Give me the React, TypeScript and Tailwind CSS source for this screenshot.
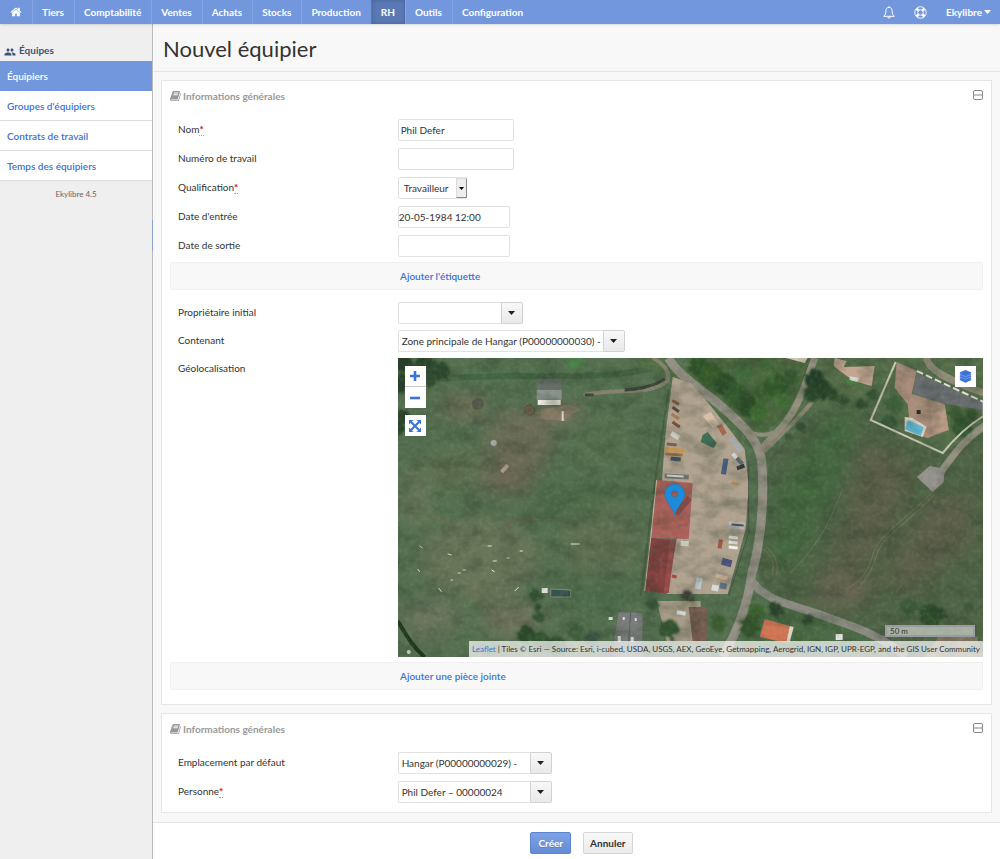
import type { ReactNode } from "react";
import { MdGroup } from "react-icons/md";

const NAV = ["Tiers", "Comptabilité", "Ventes", "Achats", "Stocks", "Production", "RH", "Outils", "Configuration"];

const SIDE_LINKS = ["Équipiers", "Groupes d'équipiers", "Contrats de travail", "Temps des équipiers"];

function HomeIcon() {
  return (
    <svg viewBox="0 0 1792 1792" className="size-3" fill="currentColor" aria-hidden="true">
      <path d="M1472 992v480q0 26-19 45t-45 19H1024v-384H768v384H384q-26 0-45-19t-19-45V992q0-1 .5-3t.5-3l575-474 575 474q1 2 1 6zm223-69l-62 74q-8 9-21 11h-3q-13 0-21-7L896 424l-692 577q-12 8-24 7-13-2-21-11l-62-74q-8-10-7-23.5t11-21.5l719-599q32-26 76-26t76 26l244 204V288q0-14 9-23t23-9h192q14 0 23 9t9 23v408l219 182q10 8 11 21.5t-7 23.5z" />
    </svg>
  );
}

function BellIcon() {
  return (
    <svg viewBox="0 0 12 13" className="h-[13px] w-3" fill="none" stroke="currentColor" aria-hidden="true">
      <path d="M6 1.3C3.9 1.3 2.9 3 2.9 4.9c0 2.9-.9 4.2-2.2 5.4h10.6C10 9.1 9.1 7.8 9.1 4.9 9.1 3 8.1 1.3 6 1.3z" />
      <path d="M4.8 11c.1.7.6 1.2 1.2 1.2S7.1 11.7 7.2 11M6 .3v1" />
    </svg>
  );
}

function LifebuoyIcon() {
  return (
    <svg viewBox="0 0 14 14" className="size-[13px]" fill="none" stroke="currentColor" aria-hidden="true">
      <circle cx="7" cy="7" r="6.2" />
      <circle cx="7" cy="7" r="2.9" />
      <path d="M2.7 2.7l2.2 2.2M11.3 2.7L9.1 4.9M2.7 11.3l2.2-2.2M11.3 11.3L9.1 9.1" strokeWidth="2.8" />
    </svg>
  );
}

function BookIcon() {
  return (
    <svg viewBox="0 0 1664 1792" className="h-3 w-[11px]" fill="currentColor" aria-hidden="true">
      <path d="M1639 478q40 57 18 129l-275 906q-19 64-76.500 107.500T1183 1664H260q-77 0-148.500-53.500T12 1479q-24-67-2-127 0-4 3-27t4-37q1-8-3-21.500t-3-19.500q2-11 8-21t16.500-23.500T52 1179q23-38 45-91.500t30-91.500q3-10 .5-30t-.5-28q3-11 17-28t17-23q21-36 42-92t25-90q1-9-2.500-32t.5-28q4-13 22-30.500t22-22.500q19-26 42.500-84.500T340 411q1-8-3-25.500t-2-26.500q2-8 9-18t18-23 17-21q8-12 16.500-30.500t15-35 16-36 19.500-32 26.500-23.500 36-11.500T556 133l-1 3q38-9 51-9h761q74 0 114 56t18 130l-274 906q-36 119-71.500 153.500T1025 1407H156q-27 0-38 15-11 16-1 43 24 70 144 70h923q29 0 56-15.500t35-41.500l300-987q7-22 5-57 38 15 59 43zm-1064 2q-4 13 2 22.500t20 9.500h608q13 0 25.500-9.500T1247 480l21-64q4-13-2-22.500t-20-9.500H638q-13 0-25.500 9.500T596 416zm-83 256q-4 13 2 22.500t20 9.500h608q13 0 25.500-9.500T1164 736l21-64q4-13-2-22.500t-20-9.500H555q-13 0-25.500 9.500T513 672z" />
    </svg>
  );
}

function Caret() {
  return (
    <svg viewBox="0 0 7 4" className="h-1 w-[7px]" fill="currentColor" aria-hidden="true">
      <path d="M0 0h7L3.5 4z" />
    </svg>
  );
}

function Panel({ children }: { children: ReactNode }) {
  return (
    <section className="relative border border-[#e6e6e6] bg-white px-2 pt-2">
      <h2 className="flex h-[14px] items-center gap-[2px] text-[10px] leading-3 font-bold text-[#999]">
        <BookIcon />
        Informations générales
      </h2>
      <button type="button" aria-label="Réduire" className="absolute top-[9px] right-2 text-[#888]">
        <svg viewBox="0 0 10 10" className="size-[10px]" fill="none" stroke="currentColor">
          <rect x=".5" y=".5" width="9" height="9" rx="1.5" />
          <path d="M1 5h8" />
        </svg>
      </button>
      {children}
    </section>
  );
}

function Row({ label, id, required, children }: { label: string; id: string; required?: boolean; children: ReactNode }) {
  return (
    <div className="flex items-start">
      <label htmlFor={id} className="w-[28%] shrink-0 pl-2 leading-5">
        {label}
        {required && <span className="border-b border-dotted border-[#e88] font-bold text-[#e00000]">*</span>}
      </label>
      {children}
    </div>
  );
}

function Combo({ id, value, className }: { id: string; value?: string; className: string }) {
  return (
    <div className="flex h-[22px]">
      <input
        id={id}
        defaultValue={value}
        className={`rounded-l-xs border border-r-0 border-[#e2e2e2] bg-white pl-[3px] text-[10px] outline-none ${className}`}
      />
      <button
        type="button"
        aria-label="Ouvrir la liste"
        className="flex w-[22px] items-center justify-center rounded-r-xs border border-[#d2d2d2] bg-linear-to-b from-[#f8f8f8] to-[#e9e9e9] text-[#222]"
      >
        <Caret />
      </button>
    </div>
  );
}

function Strip({ children }: { children: ReactNode }) {
  return (
    <div className="flex h-7 items-center rounded-xs border border-[#f0f0f0] bg-[#f8f8f8]">
      <a href="#" className="ml-[28%] pl-[2px] font-semibold text-[#3b73d9]">
        {children}
      </a>
    </div>
  );
}

// [x, y, width, height, rotation, colour]
const VEHICLES: [number, number, number, number, number, string][] = [
  [671, 402, 8, 3, 30, "#8d5a40"],
  [671, 409, 8, 3, 35, "#54483f"],
  [670, 416, 9, 3, 35, "#a87a4c"],
  [671, 424, 9, 3, 35, "#7c4b38"],
  [670, 434, 9, 5, 30, "#d8d6d0"],
  [666, 444, 10, 3, 5, "#77604d"],
  [664, 449, 20, 4, 4, "#c3944f"],
  [664, 454, 18, 3, 4, "#9b6a3a"],
  [670, 458, 10, 4, 5, "#41505e"],
  [664, 475, 24, 5, 3, "#6c706e"],
  [666, 476, 17, 2, 3, "#c6c8c4"],
  [727, 443, 17, 5, 55, "#a5abb0"],
  [731, 455, 6, 4, 50, "#d3d8da"],
  [735, 460, 8, 4, 45, "#5b6770"],
  [736, 466, 8, 4, -20, "#2f3840"],
  [716, 465, 16, 5, 100, "#475e7f"],
  [731, 483, 7, 3, 10, "#b08b5c"],
  [728, 523, 16, 7, 5, "#b6b8b6"],
  [731, 525, 12, 2, 5, "#4b4f50"],
  [728, 537, 9, 3, 5, "#f2f2f0"],
  [728, 542, 9, 3, 5, "#e9e9e6"],
  [728, 547, 9, 3, 5, "#f2f2f0"],
  [715, 543, 9, 4, 100, "#a2543f"],
  [721, 560, 10, 7, 15, "#4c5480"],
  [715, 576, 12, 4, 15, "#d9b99a"],
  [711, 586, 7, 6, 10, "#d7dbdd"],
  [719, 584, 7, 6, 10, "#5f7385"],
  [695, 579, 6, 11, 10, "#c9d2d8"],
  [680, 542, 8, 5, 5, "#e6e0d4"],
  [671, 576, 5, 3, 10, "#a9473f"],
  [676, 612, 9, 4, 10, "#dedede"],
];

const TREES: [number, number, number, string][] = [
  [402, 364, 9, "#253d28"], [412, 372, 8, "#2c452c"], [424, 365, 10, "#2a452b"], [438, 372, 10, "#2d492d"],
  [430, 381, 7, "#324d31"], [399, 383, 9, "#27402a"], [401, 418, 8, "#2b442c"], [398, 430, 6, "#2b442c"],
  [575, 362, 9, "#4b8246"], [698, 368, 10, "#2f5429"], [710, 377, 12, "#345c2c"], [724, 385, 11, "#2c4e27"],
  [735, 396, 12, "#35602d"], [746, 406, 11, "#2b4d27"], [757, 414, 9, "#3d6b32"], [763, 396, 10, "#3d6433"],
  [775, 386, 11, "#335a2c"], [782, 401, 8, "#426f38"], [790, 379, 8, "#355b30"], [744, 374, 9, "#41683a"],
  [768, 371, 10, "#476d3d"], [814, 380, 10, "#233f25"], [822, 391, 10, "#253f26"], [811, 395, 8, "#2c492a"],
  [831, 394, 7, "#2b4829"], [842, 401, 6, "#355234"], [852, 381, 6, "#4c8240"], [872, 396, 6, "#365235"],
  [800, 428, 5, "#345034"], [788, 438, 4, "#3b5737"], [860, 405, 5, "#2f4d2f"], [893, 405, 9, "#3c5f37"],
  [888, 424, 8, "#38593a"], [961, 428, 10, "#33552e"], [955, 414, 7, "#3a5a31"], [971, 415, 6, "#35542f"],
  [535, 596, 6, "#304f30"], [537, 608, 4, "#2f4d30"], [538, 618, 5, "#345436"], [525, 636, 9, "#2a4b2b"],
  [540, 642, 9, "#31542f"], [556, 647, 10, "#2e512d"], [575, 633, 8, "#3c5f3b"], [592, 640, 8, "#3a5a44"],
  [651, 605, 6, "#38583a"], [668, 630, 10, "#31522f"], [686, 596, 6, "#3a3a31"], [775, 611, 7, "#294329"],
  [756, 613, 8, "#3c632f"], [749, 628, 10, "#35592b"], [807, 621, 6, "#2d482d"], [718, 625, 8, "#3e6033"],
  [796, 637, 6, "#42623a"], [930, 617, 11, "#2d4d2c"], [908, 607, 9, "#3c5b38"], [938, 614, 7, "#2b462a"],
  [968, 608, 5, "#3c5938"],
];

const PATCHES: [number, number, number, number, string][] = [
  [463, 408, 24, 12, "#70705a"], [520, 440, 36, 30, "#6b6c56"], [505, 476, 32, 20, "#6b6855"],
  [560, 414, 26, 7, "#7d7563"], [455, 470, 34, 18, "#5f7050"], [480, 560, 60, 40, "#697558"],
  [430, 620, 30, 20, "#6c765d"], [600, 440, 30, 20, "#587350"], [600, 540, 40, 40, "#5e6f51"],
  [415, 500, 14, 30, "#69765a"], [510, 620, 32, 16, "#6f735d"], [570, 500, 40, 20, "#4d6a4a"],
  [600, 595, 40, 9, "#476b4a"],
];

function Aerial() {
  return (
    <svg
      viewBox="397 359 586 299"
      preserveAspectRatio="xMidYMid slice"
      className="block h-full w-full"
      role="img"
      aria-label="Vue aérienne"
    >
      <defs>
        <filter id="soft" x="-50%" y="-50%" width="200%" height="200%">
          <feGaussianBlur stdDeviation="9" />
        </filter>
        <filter id="leafy" x="-30%" y="-30%" width="160%" height="160%">
          <feTurbulence type="fractalNoise" baseFrequency="0.2" numOctaves="2" seed="4" />
          <feDisplacementMap in="SourceGraphic" scale="9" />
          <feGaussianBlur stdDeviation="0.8" />
        </filter>
        <filter id="grain">
          <feTurbulence type="fractalNoise" baseFrequency="0.05 0.07" numOctaves="4" seed="11" />
          <feColorMatrix values="0 0 0 0 0.02  0 0 0 0 0.04  0 0 0 0 0.02  1.8 0 0 0 -0.7" />
        </filter>
        <filter id="speck">
          <feTurbulence type="fractalNoise" baseFrequency="0.22" numOctaves="2" seed="7" />
          <feColorMatrix values="0 0 0 0 0.6  0 0 0 0 0.6  0 0 0 0 0.5  0 1.6 0 0 -0.7" />
        </filter>
      </defs>

      <path fill="#546f4f" d="M397 359h586v299H397z" />
      <g filter="url(#soft)">
        {PATCHES.map(([cx, cy, rx, ry, fill]) => (
          <ellipse key={`${cx}-${cy}`} cx={cx} cy={cy} rx={rx} ry={ry} fill={fill} />
        ))}
      </g>
      <path d="M440 380C520 372 600 384 655 368" stroke="#3f613f" strokeWidth="6" fill="none" opacity=".8" />
      <path d="M668 390L655 478L640 597" stroke="#485e41" strokeWidth="2" fill="none" />

      {/* fields on the east side */}
      <path fill="#4a663e" d="M686 359H815L798 395L783 418L764 434L745 425L700 385z" />
      <path fill="#546d49" d="M820 359H983V470L930 460L868 425L815 410L790 425z" />
      <path fill="#4f6446" d="M817 411L867 414L942 455L983 430V658H890L830 615L772 596L757 575L766 520L768 460z" />
      <g filter="url(#soft)">
        <path fill="#42673e" d="M825 415h32l-20 70-50 90-15-20 5-60z" />
        <path fill="#5b5e48" d="M862 440l50 25-10 50-55 75-20-10 20-70z" />
        <path fill="#5b5f48" d="M920 510l50-25v60l-60 50-30-10z" />
        <path fill="#656350" d="M820 570l60 10-20 30-50-5z" />
      </g>
      <g fill="none" stroke="#85825b" strokeWidth="1" opacity=".6">
        <path d="M930 495C905 520 880 535 873 553C868 572 858 585 848 588" />
        <path d="M933 496C908 523 884 536 877 553C872 570 866 580 860 586" />
        <path d="M763 550c8 8 12 14 8 26M766 548c9 9 12 18 10 28" />
        <path d="M842 490C830 520 820 545 788 575" />
      </g>
      <path d="M765 600C800 612 850 626 885 650H740z" fill="#4b6b44" />

      {/* roads */}
      <g fill="none" strokeLinejoin="round">
        <path d="M640 359C668 368 690 378 705 394C725 412 740 425 752 440" stroke="#516e47" strokeWidth="17" />
        <path d="M583 396C615 388 650 398 667 381C670 373 662 364 652 359" stroke="#84816d" strokeWidth="4" />
        <path d="M624 391C640 390 655 386 664 380" stroke="#39443a" strokeWidth="3" />
        <path d="M584 396h9" stroke="#39443a" strokeWidth="3" />
        <path d="M668 359C676 375 700 390 718 405C740 424 758 440 761 462C764 500 760 545 751 575C748 600 738 630 722 658" stroke="#949083" strokeWidth="9" />
        <path d="M814 359C808 375 802 398 790 416C780 432 768 440 760 452" stroke="#928e7c" strokeWidth="7" />
        <path d="M812 402C800 418 782 434 764 452" stroke="#8a8572" strokeWidth="4" />
        <path d="M745 431C757 438 770 437 780 430" stroke="#8f8b7a" strokeWidth="4" />
        <path d="M752 583C765 603 800 608 823 617C850 627 880 635 905 658" stroke="#8a8a80" strokeWidth="8" />
        <path d="M926 359C927 370 945 380 983 394" stroke="#908c78" strokeWidth="7" />
        <path d="M934 480C948 466 955 446 985 426" stroke="#949182" strokeWidth="7" />
      </g>
      <path fill="#93918b" d="M916 478l13-11 15 3-1 13-11 10z" />

      <path fill="#b0a28f" d="M672 378L690 384L706 402L727 428L744 450L748 487L745 530L727 595H666L676 540L690 484H661L665 433z" />
      <path fill="#a69b87" d="M656 602h44v40h-34z" />
      <path d="M748 462V534L728 597" stroke="#4a5344" strokeWidth="1" fill="none" />

      <g filter="url(#leafy)">
        {TREES.map(([cx, cy, r, fill]) => (
          <circle key={`${cx}-${cy}`} cx={cx} cy={cy} r={r} fill={fill} />
        ))}
      </g>

      {/* barn and marks in the west meadow */}
      <path fill="#8f7a65" d="M540 410l28-4 12 4-10 6-6 6-24-2z" opacity=".7" />
      <path fill="#656d66" d="M536 380h24l1 11h-25z" />
      <path fill="#87918a" d="M536 391h25v10h-25z" />
      <path fill="#fffbef" d="M537 401h23v5h-23z" />
      <path d="M562 412v10" stroke="#ded6c5" strokeWidth="2" />
      <circle cx="477" cy="405" r="6" fill="#4b4d41" opacity=".7" />
      <circle cx="529" cy="411" r="5" fill="#756350" stroke="#544e3f" />
      <circle cx="493" cy="444" r="3" fill="#a3a7a0" />
      <path d="M501 473l6-7" stroke="#b6a58c" strokeWidth="4" />
      <path d="M505 524C520 522 540 520 552 520" stroke="#7b6349" strokeWidth="1" fill="none" />
      <path d="M425 512l35 20M470 590l38 38" stroke="#796d55" strokeWidth="3" opacity=".4" />
      <path
        d="M419 547l3 2M447 555l4 1M487 547h4M492 562h4M506 559h3M519 552h3M417 570l2 3M457 574h3M438 589l3 4M450 581h2M462 571h3M514 592l4-4M570 545h9M491 571l3 2"
        stroke="#e9e6da"
        strokeWidth="1"
      />
      <path fill="#d8dedb" d="M541 589h6v5h-6z" />
      <path fill="#36524f" stroke="#7f8878" strokeWidth="1" d="M550 590l20 1v7h-20z" />
      <path d="M397 622C405 635 412 648 424 658" stroke="#22371f" strokeWidth="4" fill="none" />
      <circle cx="408" cy="653" r="2" fill="#e4e8df" />

      {/* buildings */}
      <path fill="#a95f58" d="M656 481l36 3-4 56-38-1z" />
      <path fill="#85403f" d="M650 539l21 2-7 53-20-2z" />
      <path fill="#994b46" d="M669 541l6 1-7 52h-5z" />
      <path d="M656 481l-6 58-6 53" stroke="#c9b5a3" strokeWidth="1" fill="none" />
      <path fill="#777a79" d="M618 613l24 1-1 44h-30z" />
      <path d="M630 613l-3 45" stroke="#555a59" />
      <path fill="#d9dedc" d="M622 618h2v3h-2zM634 619h2v3h-2zM608 618h4v3h-4zM617 637h3v6h-3zM630 638h3v5h-3z" />
      <path fill="#795c50" d="M688 608h18v34h-14z" />
      <path fill="#cf7453" d="M764 620l25 7-3 17-27-6z" />
      <path fill="#dad4c4" d="M789 627l4 1-4 15-3-1z" />
      <path fill="#e7e9e6" d="M835 635h7v6h-7z" />
      <path fill="#b78d7c" d="M938 638h38l7 20h-60z" opacity=".5" />
      <path fill="#c2a590" d="M834 359l12 3-3 6 31-1-3 20-18-5-11-8-9-7z" />
      <path fill="#d5d5cd" d="M849 377l9 2-1 4-8-2z" />
      <path fill="#d0c8b6" d="M785 359h22l-3 5z" />
      <path fill="#696d70" d="M916 374L983 403V411L940 404L912 395z" />
      <path d="M916 372L983 403" stroke="#e6e4d9" strokeWidth="2" strokeDasharray="7 3" />
      <path fill="#a98c79" d="M896 363l20 9-5 23 33 10 4 26-21 8-17-5-3-29-13-16z" />
      <path fill="#b99a85" d="M930 402l14 4 4 25-16 4z" />
      <path fill="#2c2a25" d="M916 411h4v4h-4z" />
      <path fill="#e2d6c5" d="M904 418l8 1 14 9-4 10-18-6z" />
      <path fill="#63c2e4" d="M907 421l16 7-3 9-16-7z" />
      <path d="M895 363L870 421L942 454C955 438 968 426 983 417V402" stroke="#c9c7b5" strokeWidth="2" fill="none" />
      <path fill="#d6c1a8" d="M702 417l8-4 8 12-6 4z" />
      <path fill="#a2674f" d="M716 427l5-2 5 9-4 3z" />
      <path fill="#3f6c53" d="M702 436l5-3 9 11-3 5-13-6z" />

      {VEHICLES.map(([x, y, width, height, angle, fill]) => (
        <rect
          key={`${x}-${y}`}
          x={x}
          y={y}
          width={width}
          height={height}
          fill={fill}
          transform={`rotate(${angle} ${x + width / 2} ${y + height / 2})`}
        />
      ))}

      <path d="M397 359h586v299H397z" filter="url(#grain)" opacity=".4" />
      <path d="M397 359h586v299H397z" filter="url(#speck)" opacity=".15" />

      <path d="M675 515l14-16" stroke="#331e1c" strokeWidth="6" opacity=".3" />
      <path
        fill="#1e8bd8"
        stroke="#1874b8"
        strokeWidth=".5"
        fillRule="evenodd"
        d="M674 516C672 508 664 502 664 495a9.500 9.500 0 0 1 20 0C684 502 676 508 674 516zM674 491.500a3.300 3.300 0 1 0 0 6.600a3.300 3.300 0 1 0 0-6.600z"
      />
    </svg>
  );
}

const MAP_BUTTON = "flex size-[21px] items-center justify-center bg-white text-[#3b73d9]";

function Map() {
  return (
    <div id="geolocation" className="relative h-[299px] min-w-0 flex-1 overflow-hidden">
      <Aerial />
      <div className="absolute top-2 left-[7px] flex flex-col gap-[7px]">
        <div className="divide-y divide-[#ccc]">
          <button type="button" aria-label="Zoom avant" className={MAP_BUTTON}>
            <svg viewBox="0 0 10 10" className="size-[10px]" stroke="currentColor" strokeWidth="2.6">
              <path d="M5 0v10M0 5h10" />
            </svg>
          </button>
          <button type="button" aria-label="Zoom arrière" className={MAP_BUTTON}>
            <svg viewBox="0 0 10 10" className="size-[10px]" stroke="currentColor" strokeWidth="2.6">
              <path d="M0 5h10" />
            </svg>
          </button>
        </div>
        <button type="button" aria-label="Plein écran" className={MAP_BUTTON}>
          <svg viewBox="0 0 12 12" className="size-3" fill="currentColor">
            <path d="M0 0h4.500L0 4.500zM12 0v4.500L7.500 0zM0 12V7.500L4.500 12zM12 12H7.500L12 7.500z" />
            <path d="M2 2l8 8M10 2l-8 8" stroke="currentColor" strokeWidth="2" />
          </svg>
        </button>
      </div>
      <button type="button" aria-label="Calques" className={`${MAP_BUTTON} absolute top-2 right-[7px]`}>
        <svg viewBox="0 0 13 13" className="size-[13px]" fill="currentColor">
          <path d="M6.500 0l6 2.500-1 .9 1 .9-1 .9 1 1-1 .9 1 1-1 .9 1 .9-6 2.900-6-2.900 1-.9-1-.9 1-1-1-.9 1-.9-1-1 1-.9-1-.9z" />
          <path d="M1 4.400l5.500 2.300L12 4.400M1 6.900l5.500 2.300L12 6.900" stroke="#fff" strokeWidth=".3" fill="none" />
        </svg>
      </button>
      <div className="absolute right-2 bottom-5 flex h-3 w-[90px] items-center border-2 border-[#9a9aa0] bg-white/50 pl-[3px] text-[8px]">
        50 m
      </div>
      <div className="absolute right-0 bottom-0 h-4 bg-white/70 px-[3px] text-[8px] leading-4 whitespace-nowrap">
        <a href="#" className="text-[#3b73d9]">
          Leaflet
        </a>{" "}
        | Tiles © Esri — Source: Esri, i-cubed, USDA, USGS, AEX, GeoEye, Getmapping, Aerogrid, IGN, IGP, UPR-EGP, and the GIS User Community
      </div>
    </div>
  );
}

const FIELD = "h-[22px] rounded-xs border border-[#e2e2e2] bg-white text-[10px] outline-none";

export default function App() {
  return (
    <div className="flex min-h-screen flex-col bg-[#f8f8f8] font-[Lato,sans-serif] text-[10px] text-[#333]">
      <header className="relative z-10 flex h-6 items-stretch bg-[#7297dd] font-bold text-white shadow-sm">
        <nav className="flex">
          <a href="#" aria-label="Accueil" className="flex w-8 items-center justify-center">
            <HomeIcon />
          </a>
          {NAV.map((item) => (
            <a
              key={item}
              href="#"
              className={`flex items-center border-l pr-[10px] pl-[9px] ${
                item === "RH" ? "border-[#5878b3] bg-[#5b7ab5] shadow-[inset_0_0_5px_#46629a]" : "border-[#83a4e2]"
              }`}
            >
              {item}
            </a>
          ))}
        </nav>
        <div className="ml-auto flex items-center pr-[9px]">
          <button type="button" aria-label="Notifications" className="mr-[19px]">
            <BellIcon />
          </button>
          <button type="button" aria-label="Aide" className="mr-[19px]">
            <LifebuoyIcon />
          </button>
          <button type="button" className="flex items-center gap-[2px]">
            Ekylibre
            <Caret />
          </button>
        </div>
      </header>

      <div className="flex flex-1">
        <aside className="relative w-[153px] shrink-0 border-r border-[#bbb] bg-[#efefef]">
          <h2 className="flex h-[37px] items-end gap-[3px] pb-[3px] pl-1 font-bold text-[#3c5279]">
            <MdGroup className="size-3" />
            Équipes
          </h2>
          <nav>
            {SIDE_LINKS.map((item, i) => (
              <a
                key={item}
                href="#"
                className={`flex h-[30px] items-center border-b pt-[2px] pl-[7px] font-semibold ${
                  i === 0 ? "border-[#6c92da] bg-[#7297dd] text-white" : "border-[#ddd] bg-white text-[#3b73d9]"
                }`}
              >
                {item}
              </a>
            ))}
          </nav>
          <p className="mt-2 text-center text-[8px] leading-[10px] text-[#666]">Ekylibre 4.5</p>
          <span className="absolute top-[196px] -right-px h-[31px] w-px bg-[#8ba3d0]" />
        </aside>

        <main className="flex min-w-0 flex-1 flex-col">
          <h1 className="h-12 border-b border-[#e4e4e4] pl-[10px] text-[22px] leading-[50px]">Nouvel équipier</h1>

          <form className="flex flex-1 flex-col">
            <div className="flex flex-1 flex-col gap-2 p-2 pb-[9px]">
              <Panel>
                <div className="mt-4 flex flex-col gap-[7px]">
                  <Row label="Nom" id="name" required>
                    <input id="name" defaultValue="Phil Defer" className={`${FIELD} w-[116px] pl-[2px]`} />
                  </Row>
                  <Row label="Numéro de travail" id="number">
                    <input id="number" className={`${FIELD} w-[116px] pl-[2px]`} />
                  </Row>
                  <Row label="Qualification" id="qualification" required>
                    <div className="relative">
                      <select id="qualification" className={`${FIELD} w-[69px] appearance-none pl-[5px]`}>
                        <option>Travailleur</option>
                      </select>
                      <span className="pointer-events-none absolute inset-y-px right-0 flex w-[11px] items-center justify-center border border-t-[#ddd] border-r-[#888] border-b-[#888] border-l-[#ddd] bg-[#eee] text-black">
                        <svg viewBox="0 0 5 3" className="h-[3px] w-[5px]" fill="currentColor">
                          <path d="M0 0h5L2.500 3z" />
                        </svg>
                      </span>
                    </div>
                  </Row>
                  <Row label="Date d'entrée" id="start">
                    <input id="start" defaultValue="20-05-1984 12:00" className={`${FIELD} w-28`} />
                  </Row>
                  <Row label="Date de sortie" id="end">
                    <input id="end" className={`${FIELD} w-28`} />
                  </Row>
                </div>
                <div className="mt-[5px] mb-3">
                  <Strip>Ajouter l'étiquette</Strip>
                </div>
                <div className="flex flex-col gap-[6px]">
                  <Row label="Propriétaire initial" id="owner">
                    <Combo id="owner" className="w-[103px]" />
                  </Row>
                  <Row label="Contenant" id="container">
                    <Combo id="container" value="Zone principale de Hangar (P00000000030) -" className="w-[205px]" />
                  </Row>
                  <Row label="Géolocalisation" id="geolocation">
                    <Map />
                  </Row>
                </div>
                <div className="mt-[5px] mb-[14px]">
                  <Strip>Ajouter une pièce jointe</Strip>
                </div>
              </Panel>

              <Panel>
                <div className="mt-4 mb-[9px] flex flex-col gap-[7px]">
                  <Row label="Emplacement par défaut" id="place">
                    <Combo id="place" value="Hangar (P00000000029) -" className="w-[132px]" />
                  </Row>
                  <Row label="Personne" id="person" required>
                    <Combo id="person" value="Phil Defer – 00000024" className="w-[132px]" />
                  </Row>
                </div>
              </Panel>
            </div>

            <footer className="flex justify-center gap-3 border-t border-[#e4e4e4] bg-white pt-[9px] pb-[5px] pl-[10px]">
              <button
                type="submit"
                className="h-[22px] rounded-xs border border-[#5c84cf] bg-linear-to-b from-[#7ea2e4] to-[#648bd6] px-[7px] font-bold text-white text-shadow-2xs"
              >
                Créer
              </button>
              <button
                type="button"
                className="h-[22px] rounded-xs border border-[#d6d6d6] bg-linear-to-b from-[#f8f8f8] to-[#ebebeb] px-[6px] font-bold"
              >
                Annuler
              </button>
            </footer>
          </form>
        </main>
      </div>
    </div>
  );
}
